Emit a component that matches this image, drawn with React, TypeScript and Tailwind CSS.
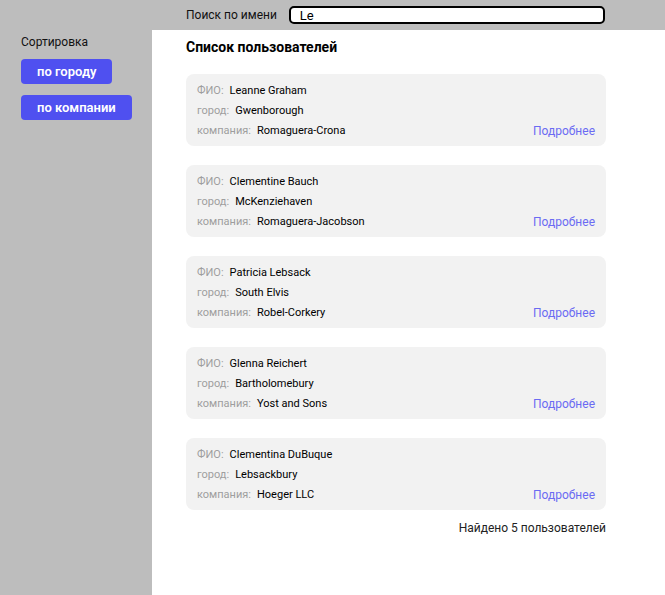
import React, { useState } from 'react';

const users = [
  { name: 'Leanne Graham', city: 'Gwenborough', company: 'Romaguera-Crona' },
  { name: 'Clementine Bauch', city: 'McKenziehaven', company: 'Romaguera-Jacobson' },
  { name: 'Patricia Lebsack', city: 'South Elvis', company: 'Robel-Corkery' },
  { name: 'Glenna Reichert', city: 'Bartholomebury', company: 'Yost and Sons' },
  { name: 'Clementina DuBuque', city: 'Lebsackbury', company: 'Hoeger LLC' },
];

const Row = ({ label, value }: { label: string; value: string }) => (
  <div className="flex h-5 items-center gap-[6px]">
    <span className="text-[#9e9e9e]">{label}</span>
    <span className="text-black">{value}</span>
  </div>
);

const App = () => {
  const [query, setQuery] = useState('Le');

  return (
    <div className="flex min-h-[595px] flex-col bg-[#bdbdbd] font-['Roboto',sans-serif] text-black">
      <header className="flex h-[30px] items-center pl-[186px]">
        <span className="text-[12px] text-[#111]">Поиск по имени</span>
        <input
          autoFocus
          value={query}
          onChange={(e) => setQuery(e.target.value)}
          className="ml-[12px] h-[18px] w-[316px] rounded-[5px] border-2 border-black bg-white px-[9px] text-[13px] leading-none outline-none"
        />
      </header>
      <div className="flex flex-1">
        <aside className="flex w-[152px] shrink-0 flex-col items-start pl-[21px] pt-[4px]">
          <span className="text-[12px] leading-4 text-[#111]">Сортировка</span>
          <button className="mt-[9px] h-[25px] whitespace-nowrap rounded-[4px] bg-[#4f50f0] px-[16px] text-[13px] font-semibold text-white">
            по городу
          </button>
          <button className="mt-[11px] h-[25px] whitespace-nowrap rounded-[4px] bg-[#4f50f0] px-[16px] text-[13px] font-semibold text-white">
            по компании
          </button>
        </aside>
        <main className="flex-1 bg-white pl-[34px] pr-[59px] pt-[7px]">
          <h1 className="text-[14px] font-bold leading-5">Список пользователей</h1>
          <div className="mt-[17px] flex flex-col gap-[19px]">
            {users.map((u) => (
              <div
                key={u.name}
                className="flex items-end justify-between rounded-[8px] bg-[#f2f2f2] px-[11px] pb-[5px] pt-[7px] text-[11px]"
              >
                <div className="flex flex-col">
                  <Row label="ФИО:" value={u.name} />
                  <Row label="город:" value={u.city} />
                  <Row label="компания:" value={u.company} />
                </div>
                <a href="#" className="text-[12px] leading-5 text-[#6b6bf3]">
                  Подробнее
                </a>
              </div>
            ))}
          </div>
          <p className="mt-[10px] text-right text-[12px] leading-4 text-[#222]">Найдено 5 пользователей</p>
        </main>
      </div>
    </div>
  );
};

export default App;
